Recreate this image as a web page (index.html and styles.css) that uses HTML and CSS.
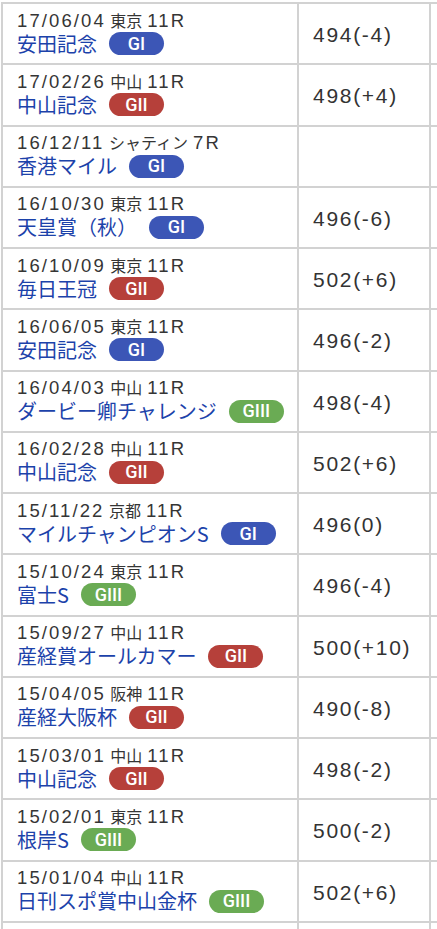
FILE: index.html
```html
<!DOCTYPE html>
<html lang="ja">
<head>
<meta charset="utf-8">
<title>戦績</title>
<link rel="stylesheet" href="styles.css">
</head>
<body>
<div class="table">
  <div class="race"><div class="meta"><span class="num">17/06/04</span><span class="place">東京</span><span class="num">11R</span></div><div class="name"><span>安田記念</span><span class="badge g1">GI</span></div></div>
  <div class="weight"><span class="num">494(-4)</span></div><div class="extra"></div>

  <div class="race"><div class="meta"><span class="num">17/02/26</span><span class="place">中山</span><span class="num">11R</span></div><div class="name"><span>中山記念</span><span class="badge g2">GII</span></div></div>
  <div class="weight"><span class="num">498(+4)</span></div><div class="extra"></div>

  <div class="race"><div class="meta"><span class="num">16/12/11</span><span class="place">シャティン</span><span class="num">7R</span></div><div class="name"><span>香港マイル</span><span class="badge g1">GI</span></div></div>
  <div class="weight"></div><div class="extra"></div>

  <div class="race"><div class="meta"><span class="num">16/10/30</span><span class="place">東京</span><span class="num">11R</span></div><div class="name"><span>天皇賞（秋）</span><span class="badge g1">GI</span></div></div>
  <div class="weight"><span class="num">496(-6)</span></div><div class="extra"></div>

  <div class="race"><div class="meta"><span class="num">16/10/09</span><span class="place">東京</span><span class="num">11R</span></div><div class="name"><span>毎日王冠</span><span class="badge g2">GII</span></div></div>
  <div class="weight"><span class="num">502(+6)</span></div><div class="extra"></div>

  <div class="race"><div class="meta"><span class="num">16/06/05</span><span class="place">東京</span><span class="num">11R</span></div><div class="name"><span>安田記念</span><span class="badge g1">GI</span></div></div>
  <div class="weight"><span class="num">496(-2)</span></div><div class="extra"></div>

  <div class="race"><div class="meta"><span class="num">16/04/03</span><span class="place">中山</span><span class="num">11R</span></div><div class="name"><span>ダービー卿チャレンジ</span><span class="badge g3">GIII</span></div></div>
  <div class="weight"><span class="num">498(-4)</span></div><div class="extra"></div>

  <div class="race"><div class="meta"><span class="num">16/02/28</span><span class="place">中山</span><span class="num">11R</span></div><div class="name"><span>中山記念</span><span class="badge g2">GII</span></div></div>
  <div class="weight"><span class="num">502(+6)</span></div><div class="extra"></div>

  <div class="race"><div class="meta"><span class="num">15/11/22</span><span class="place">京都</span><span class="num">11R</span></div><div class="name"><span>マイルチャンピオンS</span><span class="badge g1">GI</span></div></div>
  <div class="weight"><span class="num">496(0)</span></div><div class="extra"></div>

  <div class="race"><div class="meta"><span class="num">15/10/24</span><span class="place">東京</span><span class="num">11R</span></div><div class="name"><span>富士S</span><span class="badge g3">GIII</span></div></div>
  <div class="weight"><span class="num">496(-4)</span></div><div class="extra"></div>

  <div class="race"><div class="meta"><span class="num">15/09/27</span><span class="place">中山</span><span class="num">11R</span></div><div class="name"><span>産経賞オールカマー</span><span class="badge g2">GII</span></div></div>
  <div class="weight"><span class="num">500(+10)</span></div><div class="extra"></div>

  <div class="race"><div class="meta"><span class="num">15/04/05</span><span class="place">阪神</span><span class="num">11R</span></div><div class="name"><span>産経大阪杯</span><span class="badge g2">GII</span></div></div>
  <div class="weight"><span class="num">490(-8)</span></div><div class="extra"></div>

  <div class="race"><div class="meta"><span class="num">15/03/01</span><span class="place">中山</span><span class="num">11R</span></div><div class="name"><span>中山記念</span><span class="badge g2">GII</span></div></div>
  <div class="weight"><span class="num">498(-2)</span></div><div class="extra"></div>

  <div class="race"><div class="meta"><span class="num">15/02/01</span><span class="place">東京</span><span class="num">11R</span></div><div class="name"><span>根岸S</span><span class="badge g3">GIII</span></div></div>
  <div class="weight"><span class="num">500(-2)</span></div><div class="extra"></div>

  <div class="race"><div class="meta"><span class="num">15/01/04</span><span class="place">中山</span><span class="num">11R</span></div><div class="name"><span>日刊スポ賞中山金杯</span><span class="badge g3">GIII</span></div></div>
  <div class="weight"><span class="num">502(+6)</span></div><div class="extra"></div>

  <div class="race"></div><div class="weight"></div><div class="extra"></div>
</div>
</body>
</html>
```

FILE: styles.css
```css
html, body {
  margin: 0;
  padding: 0;
  background: #fff;
  overflow: hidden;
  height: 929px;
}

.table {
  margin: 2px 0 0 1px;
  display: grid;
  grid-template-columns: 294px 130px 6px;
  grid-auto-rows: 59.25px;
  gap: 2px;
  padding: 2px 0 0 2px;
  background: #d2d2d2;
  width: 434px;
  font-family: "Noto Sans CJK JP", "Liberation Sans", sans-serif;
  color: #333;
}

.race, .weight, .extra {
  background: #fff;
}

.race {
  padding: 4.5px 0 0 14px;
  box-sizing: border-box;
}

.meta {
  height: 22px;
  line-height: 22px;
  display: flex;
  align-items: baseline;
  font-size: 16px;
  white-space: nowrap;
  color: #353535;
}

.meta .num {
  font-family: "Liberation Sans", sans-serif;
  font-size: 18.5px;
  letter-spacing: 2.1px;
}

.meta .place {
  margin: 0 5px 0 4.5px;
}

.name {
  height: 26px;
  display: flex;
  align-items: center;
  font-size: 20px;
  line-height: 26px;
  color: #1c42aa;
  white-space: nowrap;
}

.badge {
  display: inline-flex;
  justify-content: center;
  align-items: center;
  width: 55px;
  height: 23px;
  border-radius: 12px;
  margin-left: 12px;
  color: #fff;
  font-family: "Roboto", "Liberation Sans", sans-serif;
  font-weight: 500;
  font-size: 18px;
  line-height: 1;
}

.g1 { background: #3c56b6; }
.g2 { background: #b6403a; }
.g3 { background: #6aab54; }

.weight {
  display: flex;
  align-items: center;
  padding: 3px 0 0 14px;
  box-sizing: border-box;
  font-family: "Liberation Sans", sans-serif;
  font-size: 21px;
  color: #333;
}

.weight .num {
  letter-spacing: 1.7px;
}
```
